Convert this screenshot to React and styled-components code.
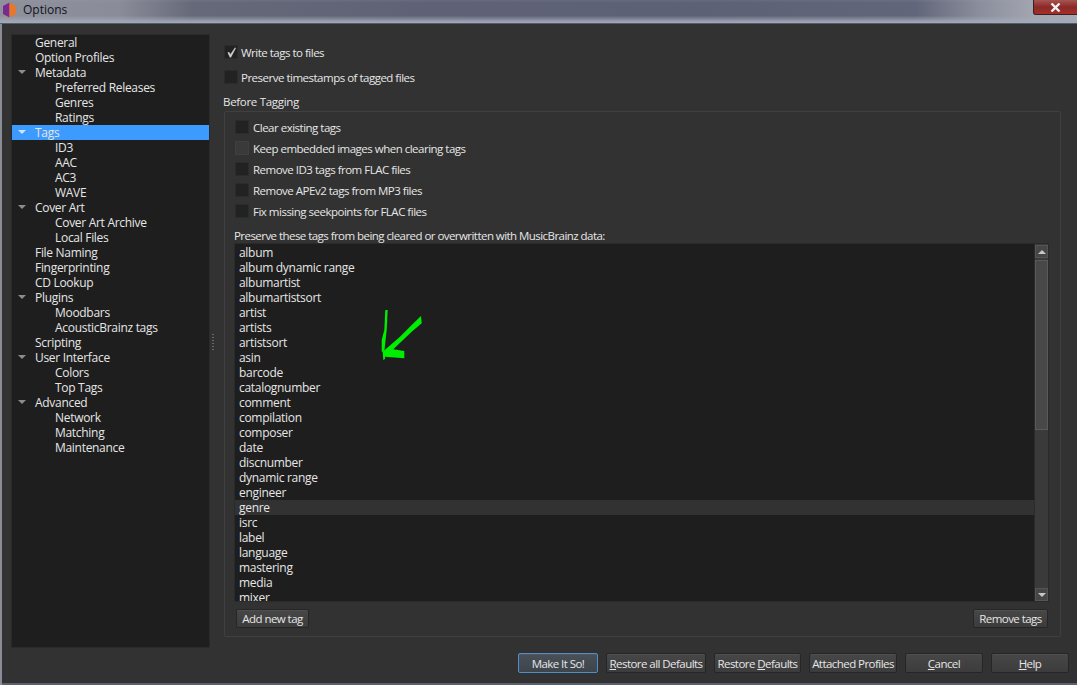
import React from "react";
import styled, { createGlobalStyle } from "styled-components";

const Global = createGlobalStyle`
  html, body { margin: 0; padding: 0; background: #323232; overflow: hidden; }
  * { box-sizing: border-box; }
`;

const Win = styled.div`
  width: 1077px; height: 685px; display: flex; flex-direction: column; overflow: hidden;
  font-family: "Open Sans", "Noto Sans", sans-serif; font-size: 12px; letter-spacing: -0.3px; color: #e6e6e6;
  background: linear-gradient(90deg, #8a8d98 0, #8a8d98 2px, #323232 2px);
`;
const TitleBar = styled.div`
  height: 24px; flex: none; display: flex; align-items: flex-start; color: #12121a; padding: 2px 0 0 2px; gap: 6px;
  background:
    linear-gradient(180deg, rgba(160,164,178,.15) 0, rgba(160,164,178,0) 12%, rgba(160,164,178,0) 68%, rgba(165,169,183,.95) 96%),
    linear-gradient(90deg, #8e909c 0, #8a8c99 11%, #666979 18%, #5f6276 40%, #5d6176 65%, #62667a 85%, #8b8e9c 91%, #a3a6b1 96%, #a8abb5 100%);
  border-bottom: 1px solid #4f5f70;
`;
const TitleText = styled.span` font-size: 12px; letter-spacing: 0; line-height: 16px; `;
const CloseBtn = styled.div`
  margin-left: auto; margin-top: -2px; width: 44px; height: 15px; display: flex; align-items: center; justify-content: center;
  background: linear-gradient(180deg, #a65452 0, #8a2a28 50%, #a82e2a 100%);
  border: 1px solid #3a2020; border-top: none; border-right: none; border-bottom-left-radius: 3px;
`;
const Body = styled.div`
  flex: 1; min-height: 0; display: flex; flex-direction: column; margin-left: 2px; padding: 11px 8px 0 10px;
  border-bottom: 2px solid #5a6070;
`;
const Main = styled.div` display: flex; height: 612px; flex: none; `;
const Tree = styled.div` width: 197px; flex: none; background: #1e1e1e; box-shadow: 0 0 0 1px #2a2a2a; `;
const TreeRow = styled.div`
  height: 15px; line-height: 15px; white-space: nowrap; position: relative;
  padding-left: ${p => (p.$child ? 43 : 23)}px;
  background: ${p => (p.$selected ? "#3d9bff" : "transparent")};
`;
const Triangle = styled.span`
  position: absolute; left: 6px; top: 5px; width: 0; height: 0;
  border-left: 4px solid transparent; border-right: 4px solid transparent;
  border-top: 4px solid ${p => (p.$selected ? "#cfe4ff" : "#8c8c8c")};
`;
const Splitter = styled.div`
  width: 15px; flex: none; display: flex; align-items: center; justify-content: flex-start; padding: 2px 0 0 3px;
`;
const Grip = styled.div`
  width: 2px; height: 16px;
  background: repeating-linear-gradient(180deg, #6a6a6a 0, #6a6a6a 1px, transparent 1px, transparent 3px);
`;
const Right = styled.div` flex: 1; min-width: 0; display: flex; flex-direction: column; padding-top: 10px; `;
const CheckRow = styled.div`
  display: flex; align-items: center; gap: ${p => p.$gap}px; height: 14px; white-space: nowrap;
  font-size: 11.5px; letter-spacing: -0.5px;
`;
const CheckBox = styled.span`
  width: 14px; height: 14px; flex: none; display: flex; align-items: center; justify-content: center;
  background: ${p => (p.$light ? "#3a3a3a" : "#222222")}; border: 1px solid ${p => (p.$light ? "#404040" : "#2b2b2b")};
`;
const TopChecks = styled.div` display: flex; flex-direction: column; gap: 11px; `;
const GroupTitle = styled.div` line-height: 16px; margin: 10px 0 1px -1px; font-size: 11.5px; `;
const Group = styled.div`
  width: 837px; height: 526px; border: 1px solid #404040; border-radius: 2px; padding: 8px 10px 0 10px;
  display: flex; flex-direction: column;
`;
const GroupChecks = styled.div` display: flex; flex-direction: column; gap: 7px; `;
const ListLabel = styled.div`
  line-height: 16px; margin: 10px 0 0 -1px; white-space: nowrap; font-size: 11.5px; letter-spacing: -0.55px;
`;
const ListWrap = styled.div`
  position: relative; width: 813px; height: 357px; display: flex; background: #1e1e1e;
  box-shadow: 0 0 0 1px #2a2a2a;
`;
const ListRows = styled.div` flex: 1; overflow: hidden; padding-top: 1px; `;
const TagRow = styled.div`
  height: 15px; line-height: 15px; padding-left: 4px; background: ${p => (p.$hl ? "#323232" : "transparent")};
`;
const ScrollBar = styled.div`
  width: 14px; flex: none; background: #3a3a3a; border-left: 1px solid #2a2a2a; display: flex; flex-direction: column;
  padding-top: 1px;
`;
const ScrollBtn = styled.div`
  width: 13px; height: 13px; flex: none; background: #464646; border: 1px solid #555;
  display: flex; align-items: center; justify-content: center;
`;
const Arrow = styled.span`
  width: 0; height: 0; border-left: 4px solid transparent; border-right: 4px solid transparent;
  ${p => (p.$up ? "border-bottom: 4px solid #c8c8c8;" : "border-top: 4px solid #c8c8c8;")}
`;
const Thumb = styled.div` width: 13px; height: 170px; margin-top: 2px; background: #484848; border: 1px solid #5a5a5a; `;
const Spacer = styled.div` flex: 1; `;
const Ink = styled.svg` position: absolute; left: 0; top: 0; pointer-events: none; `;
const GroupButtons = styled.div` display: flex; justify-content: space-between; margin: 8px 2px 0 1px; `;
const Btn = styled.div`
  height: ${p => p.$h || 20}px; width: ${p => p.$w}px; display: flex; align-items: center; justify-content: center; white-space: nowrap;
  font-size: 11.5px; letter-spacing: -0.55px;
  border-radius: 2px; border: 1px solid ${p => (p.$primary ? "#4f8ecb" : "#262626")};
  background: ${p => (p.$primary ? "linear-gradient(180deg,#4a5058,#3e444c)" : "linear-gradient(180deg,#474747,#3c3c3c)")};
  box-shadow: inset 0 1px 0 rgba(255,255,255,.05);
`;
const Footer = styled.div` display: flex; justify-content: flex-end; gap: 8px; margin-top: 6px; `;
const Mn = styled.span` text-decoration: underline; `;

const tree = [
  ["General"], ["Option Profiles"], ["Metadata", "p"], ["Preferred Releases", "c"], ["Genres", "c"], ["Ratings", "c"],
  ["Tags", "s"], ["ID3", "c"], ["AAC", "c"], ["AC3", "c"], ["WAVE", "c"], ["Cover Art", "p"], ["Cover Art Archive", "c"],
  ["Local Files", "c"], ["File Naming"], ["Fingerprinting"], ["CD Lookup"], ["Plugins", "p"], ["Moodbars", "c"],
  ["AcousticBrainz tags", "c"], ["Scripting"], ["User Interface", "p"], ["Colors", "c"], ["Top Tags", "c"],
  ["Advanced", "p"], ["Network", "c"], ["Matching", "c"], ["Maintenance", "c"],
];
const tags = ["album","album dynamic range","albumartist","albumartistsort","artist","artists","artistsort","asin","barcode","catalognumber","comment","compilation","composer","date","discnumber","dynamic range","engineer","genre","isrc","label","language","mastering","media","mixer"];
const groupChecks = ["Clear existing tags","Keep embedded images when clearing tags","Remove ID3 tags from FLAC files","Remove APEv2 tags from MP3 files","Fix missing seekpoints for FLAC files"];

export default function App() {
  return (
    <Win>
      <Global />
      <TitleBar>
        <svg width="15" height="16" viewBox="0 0 15 16">
          <path d="M7.5 0.5 L1 4 L1 12 L7.5 15.5 Z" fill="#7a2a8e" />
          <path d="M7.5 0.5 L14 4 L14 12 L7.5 15.5 Z" fill="#e8772e" />
        </svg>
        <TitleText>Options</TitleText>
        <CloseBtn>
          <svg width="11" height="9" viewBox="0 0 11 9">
            <path d="M1.5 0.5 L9.5 8.5 M9.5 0.5 L1.5 8.5" stroke="#f2f2f2" strokeWidth="2.4" />
          </svg>
        </CloseBtn>
      </TitleBar>
      <Body>
        <Main>
          <Tree>
            {tree.map(([t, k]) => (
              <TreeRow key={t} $child={k === "c"} $selected={k === "s"}>
                {(k === "p" || k === "s") && <Triangle $selected={k === "s"} />}
                {t}
              </TreeRow>
            ))}
          </Tree>
          <Splitter><Grip /></Splitter>
          <Right>
            <TopChecks>
              <CheckRow $gap={3}>
                <CheckBox>
                  <svg width="11" height="11" viewBox="0 0 11 11">
                    <path d="M1.5 5.5 L3 5 L4.5 7 L9 0.5 L10 1 L5 10.5 L3.8 10.5 Z" fill="#c8c8c8" />
                  </svg>
                </CheckBox>
                Write tags to files
              </CheckRow>
              <CheckRow $gap={3}><CheckBox />Preserve timestamps of tagged files</CheckRow>
            </TopChecks>
            <GroupTitle>Before Tagging</GroupTitle>
            <Group>
              <GroupChecks>
                {groupChecks.map((c, i) => (
                  <CheckRow key={c} $gap={4}><CheckBox $light={i === 1} />{c}</CheckRow>
                ))}
              </GroupChecks>
              <ListLabel>Preserve these tags from being cleared or overwritten with MusicBrainz data:</ListLabel>
              <ListWrap>
                <ListRows>
                  {tags.map(t => <TagRow key={t} $hl={t === "genre"}>{t}</TagRow>)}
                </ListRows>
                <ScrollBar>
                  <ScrollBtn><Arrow $up /></ScrollBtn>
                  <Thumb />
                  <Spacer />
                  <ScrollBtn><Arrow /></ScrollBtn>
                </ScrollBar>
                <Ink width="220" height="130">
                  <path d="M150.300 66 L152.700 66 L151.700 86 L149.300 107.700 L146.700 107.700 L146.700 96 L149.300 86 Z" fill="#00ee00" />
                  <path d="M186 72 L186.700 79.300 L176.700 87.700 L158.300 105.300 L169.300 107 L169.300 114.300 L150 112.700 L150 115 L148.300 116 L147.700 107.700 L165 92.700 L176.700 81 Z" fill="#00ee00" />
                </Ink>
              </ListWrap>
              <GroupButtons>
                <Btn $w={73} $h={19}>Add new tag</Btn>
                <Btn $w={75} $h={19}>Remove tags</Btn>
              </GroupButtons>
            </Group>
          </Right>
        </Main>
        <Footer>
          <Btn $w={80} $primary>Make It So!</Btn>
          <Btn $w={100}><span><Mn>R</Mn>estore all Defaults</span></Btn>
          <Btn $w={87}><span>Restore <Mn>D</Mn>efaults</span></Btn>
          <Btn $w={88}>Attached Profiles</Btn>
          <Btn $w={78}><span><Mn>C</Mn>ancel</span></Btn>
          <Btn $w={78}><span><Mn>H</Mn>elp</span></Btn>
        </Footer>
      </Body>
    </Win>
  );
}
